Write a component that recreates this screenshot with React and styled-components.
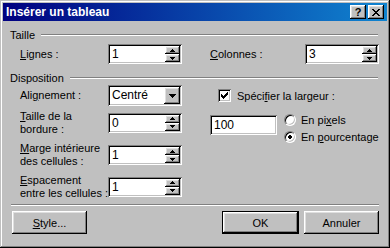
import { createGlobalStyle, styled } from "styled-components";

const GlobalStyle = createGlobalStyle`
  html, body {
    margin: 0;
    padding: 0;
    background: #fff;
  }
  body {
    font-family: "Liberation Sans", Arial, sans-serif;
    font-size: 11px;
    color: #000;
  }
`;

const raised = `
  box-shadow: inset -1px -1px #000, inset 1px 1px #fff,
    inset -2px -2px #808080, inset 2px 2px #dfdfdf;
`;

const sunken = `
  box-shadow: inset 1px 1px #808080, inset -1px -1px #fff,
    inset 2px 2px #000, inset -2px -2px #c0c0c0;
`;

const Window = styled.div`
  width: 390px;
  height: 248px;
  box-sizing: border-box;
  padding: 3px;
  background: #c0c0c0;
  box-shadow: inset -1px -1px #000, inset 1px 1px #c0c0c0,
    inset -2px -2px #808080, inset 2px 2px #fff;
  display: flex;
  flex-direction: column;
`;

const TitleBar = styled.div`
  height: 18px;
  display: flex;
  align-items: center;
  padding: 0 3px 0 3px;
  background: linear-gradient(90deg, #000080, #1084d0);
`;

const TitleText = styled.div`
  flex: 1;
  color: #fff;
  font-weight: bold;
  font-size: 12px;
`;

const TitleButton = styled.div`
  width: 16px;
  height: 14px;
  box-sizing: border-box;
  background: #c0c0c0;
  ${raised}
  display: flex;
  align-items: center;
  justify-content: center;
  font-weight: bold;
  font-size: 11px;
  line-height: 14px;
  margin-left: ${(p) => p.$gap || 0}px;
`;

const Content = styled.div`
  flex: 1;
  display: flex;
  flex-direction: column;
  padding: 0 8px 0 5px;
`;

const GroupHeader = styled.div`
  height: 14px;
  margin-top: ${(p) => p.$top}px;
  display: flex;
  align-items: center;
  gap: 6px;
  padding-left: 2px;
`;

const Rule = styled.div`
  flex: 1;
  height: 0;
  margin-right: 1px;
  border-top: 1px solid #808080;
  border-bottom: 1px solid #fff;
`;

const TwoCols = styled.div`
  display: grid;
  grid-template-columns: 202px 169px;
  margin-top: ${(p) => p.$top || 0}px;
`;

const Field = styled.div`
  display: flex;
  align-items: center;
  height: ${(p) => p.$h}px;
`;

const Label = styled.div`
  width: ${(p) => p.$w}px;
  padding-left: ${(p) => p.$pad || 0}px;
  box-sizing: border-box;
  line-height: 13px;
  white-space: nowrap;
`;

const Key = styled.span`
  text-decoration: underline;
  text-underline-offset: 1px;
`;

const Edit = styled.div`
  width: ${(p) => p.$w}px;
  height: 20px;
  box-sizing: border-box;
  padding: 2px;
  background: #fff;
  ${sunken}
  display: flex;
`;

const EditText = styled.div`
  flex: 1;
  padding-left: 2px;
  line-height: 16px;
  font-size: 12px;
`;

const Spin = styled.div`
  width: 15px;
  display: flex;
  flex-direction: column;
`;

const SpinButton = styled.div`
  flex: 1;
  background: #c0c0c0;
  ${raised}
  display: flex;
  align-items: center;
  justify-content: center;
`;

const Select = styled(Edit)`
  height: 21px;
`;

const DropButton = styled.div`
  width: 16px;
  background: #c0c0c0;
  ${raised}
  display: flex;
  align-items: center;
  justify-content: center;
`;

const LeftCol = styled.div`
  display: flex;
  flex-direction: column;
`;

const RightCol = styled.div`
  display: flex;
  flex-direction: column;
`;

const CheckRow = styled.label`
  height: 21px;
  display: flex;
  align-items: center;
  gap: 6px;
  padding-left: 8px;
`;

const CheckBox = styled.div`
  width: 13px;
  height: 13px;
  box-sizing: border-box;
  background: #fff;
  ${sunken}
  display: flex;
  align-items: center;
  justify-content: center;
`;

const WidthBlock = styled.div`
  display: flex;
  align-items: flex-start;
  gap: 7px;
  margin-top: 5px;
`;

const RadioList = styled.div`
  display: flex;
  flex-direction: column;
`;

const RadioRow = styled.div`
  height: 17px;
  display: flex;
  align-items: center;
  gap: 5px;
`;

const Radio = styled.div`
  width: 12px;
  height: 12px;
  box-sizing: border-box;
  border-radius: 50%;
  background: #fff;
  border: 1px solid;
  border-color: #808080 #fff #fff #808080;
  box-shadow: inset 1px 1px #000, inset -1px -1px #c0c0c0;
  display: flex;
  align-items: center;
  justify-content: center;
`;

const Separator = styled.div`
  margin-top: 2px;
  margin-left: 3px;
  border-top: 1px solid #808080;
  border-bottom: 1px solid #fff;
`;

const ButtonRow = styled.div`
  display: flex;
  align-items: center;
  margin-top: 5px;
  padding-left: 4px;
`;

const Button = styled.div`
  width: ${(p) => (p.$default ? 77 : 75)}px;
  height: 23px;
  box-sizing: border-box;
  background: #c0c0c0;
  ${(p) =>
    p.$default
      ? `box-shadow: inset 0 0 0 1px #000, inset -2px -2px #000, inset 2px 2px #fff,
          inset -3px -3px #808080, inset 3px 3px #dfdfdf;`
      : raised}
  display: flex;
  align-items: center;
  justify-content: center;
  margin-left: ${(p) => p.$left || 0}px;
`;

const Spacer = styled.div`
  flex: 1;
`;

function Pixels({ rows, color = "#000" }) {
  const w = rows[0].length;
  const h = rows.length;
  return (
    <svg width={w} height={h} viewBox={`0 0 ${w} ${h}`} shapeRendering="crispEdges">
      {rows.map((row, y) =>
        row.split("").map((c, x) =>
          c === "#" ? <rect key={`${x}-${y}`} x={x} y={y} width="1" height="1" fill={color} /> : null
        )
      )}
    </svg>
  );
}

const CLOSE = ["##....##", ".##..##.", "..####..", "...##...", "..####..", ".##..##.", "##....##"];
const CHECK = ["......#", ".....##", "#...###", "##.###.", "#####..", ".###...", "..#...."];
const UP = ["..#..", ".###.", "#####"];
const DOWN = ["#####", ".###.", "..#.."];
const DROP = ["#######", ".#####.", "..###..", "...#..."];
const DOT = [".##.", "####", "####", ".##."];

function SpinEdit({ value, width = 74 }) {
  return (
    <Edit $w={width}>
      <EditText>{value}</EditText>
      <Spin>
        <SpinButton>
          <Pixels rows={UP} />
        </SpinButton>
        <SpinButton>
          <Pixels rows={DOWN} />
        </SpinButton>
      </Spin>
    </Edit>
  );
}

export default function App() {
  return (
    <>
      <GlobalStyle />
      <Window>
        <TitleBar>
          <TitleText>Insérer un tableau</TitleText>
          <TitleButton>?</TitleButton>
          <TitleButton $gap={2}>
            <Pixels rows={CLOSE} />
          </TitleButton>
        </TitleBar>
        <Content>
          <GroupHeader $top={7}>
            Taille
            <Rule />
          </GroupHeader>
          <TwoCols $top={2}>
            <Field $h={20}>
              <Label $w={100} $pad={12}>
                <Key>L</Key>ignes :
              </Label>
              <SpinEdit value="1" />
            </Field>
            <Field $h={20}>
              <Label $w={95}>
                <Key>C</Key>olonnes :
              </Label>
              <SpinEdit value="3" />
            </Field>
          </TwoCols>
          <GroupHeader $top={7}>
            Disposition
            <Rule />
          </GroupHeader>
          <TwoCols>
            <LeftCol>
              <Field $h={21}>
                <Label $w={100} $pad={12}>
                  Ali<Key>g</Key>nement :
                </Label>
                <Select $w={74}>
                  <EditText>Centré</EditText>
                  <DropButton>
                    <Pixels rows={DROP} />
                  </DropButton>
                </Select>
              </Field>
              <Field $h={33}>
                <Label $w={100} $pad={12}>
                  <Key>T</Key>aille de la
                  <br />
                  bordure :
                </Label>
                <SpinEdit value="0" />
              </Field>
              <Field $h={32}>
                <Label $w={100} $pad={12}>
                  <Key>M</Key>arge intérieure
                  <br />
                  des cellules :
                </Label>
                <SpinEdit value="1" />
              </Field>
              <Field $h={31}>
                <Label $w={100} $pad={12}>
                  <Key>E</Key>spacement
                  <br />
                  entre les cellules :
                </Label>
                <SpinEdit value="1" />
              </Field>
            </LeftCol>
            <RightCol>
              <CheckRow>
                <CheckBox>
                  <Pixels rows={CHECK} />
                </CheckBox>
                <span>
                  Spéci<Key>f</Key>ier la largeur :
                </span>
              </CheckRow>
              <WidthBlock>
                <Edit $w={67} style={{ marginTop: 4 }}>
                  <EditText>100</EditText>
                </Edit>
                <RadioList>
                  <RadioRow>
                    <Radio />
                    <span>
                      En pi<Key>x</Key>els
                    </span>
                  </RadioRow>
                  <RadioRow>
                    <Radio>
                      <Pixels rows={DOT} />
                    </Radio>
                    <span>
                      En <Key>p</Key>ourcentage
                    </span>
                  </RadioRow>
                </RadioList>
              </WidthBlock>
            </RightCol>
          </TwoCols>
          <Separator />
          <ButtonRow>
            <Button>
              <span>
                <Key>S</Key>tyle...
              </span>
            </Button>
            <Spacer />
            <Button $default>OK</Button>
            <Button $left={5}>Annuler</Button>
          </ButtonRow>
        </Content>
      </Window>
    </>
  );
}
